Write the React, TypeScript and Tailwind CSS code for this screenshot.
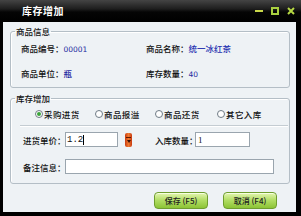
import React from "react";

const cjk = { fontFamily: '"Noto Sans CJK SC", "Noto Sans", sans-serif' };

function Radio({ label, checked }: { label: string; checked?: boolean }) {
  return (
    <div className="flex items-center gap-[1px]">
      <span className="w-[8px] h-[8px] rounded-full border border-[#6f7b85] bg-white flex items-center justify-center">
        {checked && <span className="w-[4px] h-[4px] rounded-full bg-[#3aa43a]" />}
      </span>
      <span className="text-[8.5px] leading-[12px] text-[#111] font-medium tracking-[0.4px] whitespace-nowrap">{label}</span>
    </div>
  );
}

export default function App() {
  return (
    <div className="w-[301px] h-[216px] bg-black flex flex-col overflow-hidden" style={cjk}>
      {/* title bar */}
      <div className="h-[22px] flex items-center bg-[linear-gradient(#444,#1e1e1e_40%,#050505_55%,#000)]">
        <span className="ml-[22px] text-white font-bold text-[10px] leading-[12px] tracking-[0.5px] [text-shadow:0_1px_1px_#000]">
          库存增加
        </span>
        <div className="ml-auto mr-[6px] flex items-center gap-[8px]">
          <svg width="8" height="8" viewBox="0 0 8 8">
            <rect x="0" y="3" width="8" height="2" fill="#c9d84a" />
          </svg>
          <svg width="8" height="8" viewBox="0 0 8 8">
            <rect x="1" y="1" width="6" height="6" fill="none" stroke="#a9d040" strokeWidth="2" />
          </svg>
          <svg width="8" height="8" viewBox="0 0 8 8">
            <path d="M1 1 L7 7 M7 1 L1 7" stroke="#b6d844" strokeWidth="2" />
          </svg>
        </div>
      </div>

      {/* body */}
      <div className="flex-1 ml-[3px] mr-[5px] mb-[4px] bg-[#eef2f5] flex flex-col">
        {/* group 1 */}
        <fieldset className="mt-[4px] ml-[7px] mr-[6px] border border-[#b4bec6] rounded-[3px] pl-[4px] pb-[6px] shadow-[inset_1px_1px_0_#fff]">
          <legend className="px-[1px] text-[8.5px] leading-[10px] text-[#111] font-medium">商品信息</legend>
          <div className="ml-[6px] mt-[6px] grid grid-cols-[125px_1fr] gap-y-[11px] text-[8.5px] leading-[12px] whitespace-nowrap font-medium">
            <div className="text-[#111]">
              商品编号：<span className="text-[#1e2aa0]" style={{ fontFamily: '"DejaVu Sans", sans-serif', fontSize: "7.5px" }}>00001</span>
            </div>
            <div className="text-[#111]">
              商品名称：<span className="text-[#2530b0]">统一冰红茶</span>
            </div>
            <div className="text-[#111]">
              商品单位：<span className="text-[#1e2aa0]">瓶</span>
            </div>
            <div className="text-[#111]">
              库存数量：<span className="text-[#1e2aa0]" style={{ fontFamily: '"DejaVu Sans", sans-serif', fontSize: "7.5px" }}>40</span>
            </div>
          </div>
        </fieldset>

        {/* group 2 */}
        <fieldset className="mt-[5px] ml-[7px] mr-[6px] border border-[#b4bec6] rounded-[3px] pl-[4px] pb-[9px] shadow-[inset_1px_1px_0_#fff]">
          <legend className="px-[1px] text-[8.5px] leading-[10px] text-[#111] font-medium">库存增加</legend>
          <div className="ml-[20px] mt-[5px] grid grid-cols-[60px_60px_62px_auto] h-[12px] items-center">
            <Radio label="采购进货" checked />
            <Radio label="商品报溢" />
            <Radio label="商品还货" />
            <Radio label="其它入库" />
          </div>
          <div className="mt-[5px] ml-[5px] mr-[1px] h-[1px] bg-[#c4ccd2] shadow-[0_1px_0_#fff]" />
          <div className="mt-[6px] ml-[8px] flex items-center h-[15px] font-medium">
            <span className="w-[42px] shrink-0 whitespace-nowrap text-[8.5px] leading-[12px] text-[#111]">进货单价：</span>
            <div className="w-[53px] shrink-0 h-[15px] bg-white border border-[#9aa5ae] flex items-center pl-[1px]">
              <span className="text-[9px] leading-[12px] text-[#111]" style={{ fontFamily: '"Liberation Mono", monospace' }}>1.2</span>
              <span className="w-[1px] h-[10px] bg-black" />
            </div>
            <div className="ml-[7px] shrink-0 w-[7px] h-[14px] rounded-[2px] bg-[linear-gradient(90deg,#c83a10,#f07a30,#c83a10)] flex flex-col items-center justify-center gap-[2px]">
              <span className="w-[5px] h-[1px] bg-[#5a1a05]" />
              <svg width="4" height="3" viewBox="0 0 4 3">
                <path d="M0 0 L4 0 L2 3 Z" fill="#3a1005" />
              </svg>
            </div>
            <span className="ml-[23px] w-[40px] shrink-0 whitespace-nowrap text-[8.5px] leading-[12px] text-[#111]">入库数量：</span>
            <div className="w-[55px] shrink-0 h-[15px] bg-white border border-[#9aa5ae] flex items-center pl-[2px]">
              <span className="text-[9px] leading-[12px] text-[#111]" style={{ fontFamily: '"Liberation Serif", serif' }}>1</span>
            </div>
          </div>
          <div className="mt-[12px] ml-[8px] flex items-center h-[15px] font-medium">
            <span className="w-[42px] shrink-0 whitespace-nowrap text-[8.5px] leading-[12px] text-[#111]">备注信息：</span>
            <div className="w-[209px] shrink-0 h-[15px] bg-white border border-[#9aa5ae]" />
          </div>
        </fieldset>

        {/* buttons */}
        <div className="mt-[8px] mr-[19px] flex justify-end gap-[15px]">
          <button className="w-[54px] h-[17px] rounded-[4px] border border-[#6f9e2e] bg-[linear-gradient(#e4f6b0,#b0dc62_50%,#8cc436)] shadow-[inset_0_1px_0_#f6ffe0] text-[8px] leading-[12px] text-[#222] font-medium whitespace-nowrap">
            保存 (F5)
          </button>
          <button className="w-[54px] h-[17px] rounded-[4px] border border-[#6f9e2e] bg-[linear-gradient(#e4f6b0,#b0dc62_50%,#8cc436)] shadow-[inset_0_1px_0_#f6ffe0] text-[8px] leading-[12px] text-[#222] font-medium whitespace-nowrap">
            取消 (F4)
          </button>
        </div>
      </div>
    </div>
  );
}
